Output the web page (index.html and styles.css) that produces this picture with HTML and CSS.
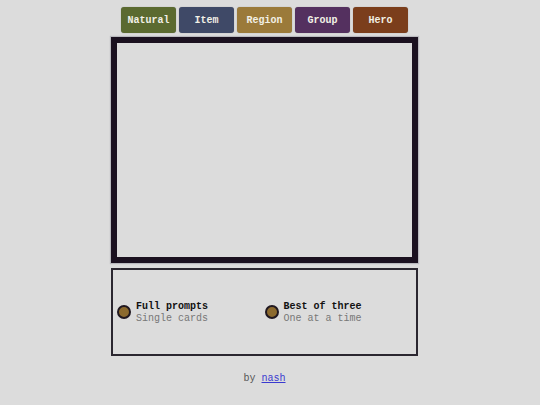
FILE: index.html
```html
<!DOCTYPE html>
<html>
<head>
<meta charset="utf-8">
<link rel="stylesheet" href="styles.css">
</head>
<body>
<div class="page">
  <nav class="tabs">
    <button class="tab natural">Natural</button>
    <button class="tab item">Item</button>
    <button class="tab region">Region</button>
    <button class="tab group">Group</button>
    <button class="tab hero">Hero</button>
  </nav>
  <div class="canvas"></div>
  <div class="modes">
    <label class="mode">
      <span class="dot"></span>
      <span class="mode-text"><b>Full prompts</b><span class="sub">Single cards</span></span>
    </label>
    <label class="mode">
      <span class="dot"></span>
      <span class="mode-text"><b>Best of three</b><span class="sub">One at a time</span></span>
    </label>
  </div>
  <footer class="footer">by <a href="#">nash</a></footer>
</div>
</body>
</html>
```
FILE: styles.css
```css
html, body {
  margin: 0;
  padding: 0;
  background: #dcdcdc;
}
body {
  font-family: "Liberation Mono", "Courier New", monospace;
  font-size: 10px;
  padding-right: 11px;
}
.page {
  width: 307px;
  margin: 0 auto;
  display: flex;
  flex-direction: column;
  align-items: center;
  padding-top: 7px;
}
.tabs {
  display: flex;
  gap: 3px;
}
.tab {
  width: 55px;
  height: 26px;
  border: none;
  border-radius: 3px;
  color: #f2f0e6;
  font-family: "Liberation Mono", "Courier New", monospace;
  font-weight: bold;
  font-size: 10px;
  padding: 0;
  box-shadow: 0 0 1px rgba(0,0,0,0.35);
}
.natural { background: #5b6a30; }
.item { background: #3f4967; }
.region { background: #9b7a3a; }
.group { background: #54305f; }
.hero { background: #7b3e1c; }
.canvas {
  margin-top: 4px;
  width: 295px;
  height: 214px;
  border: 6px solid #1b1120;
  background: #dcdcdc;
  box-shadow: 0 0 1px 1px rgba(120,120,135,0.35);
}
.modes {
  margin-top: 5px;
  width: 295px;
  height: 84px;
  border: 2px solid #2b2730;
  padding: 0 4px;
  display: grid;
  grid-template-columns: 1fr 1fr;
  align-items: center;
}
.mode {
  display: flex;
  align-items: center;
  gap: 5px;
}
.dot {
  width: 10px;
  height: 10px;
  border-radius: 50%;
  background: #8c6a2e;
  border: 2px solid #201820;
  flex: none;
}
.mode-text {
  display: flex;
  flex-direction: column;
  line-height: 12px;
  padding-top: 1px;
  color: #111;
}
.sub {
  color: #777;
}
.footer {
  margin-top: 16px;
  color: #555;
  line-height: 14px;
}
.footer a {
  color: #3a3ad0;
}
```
